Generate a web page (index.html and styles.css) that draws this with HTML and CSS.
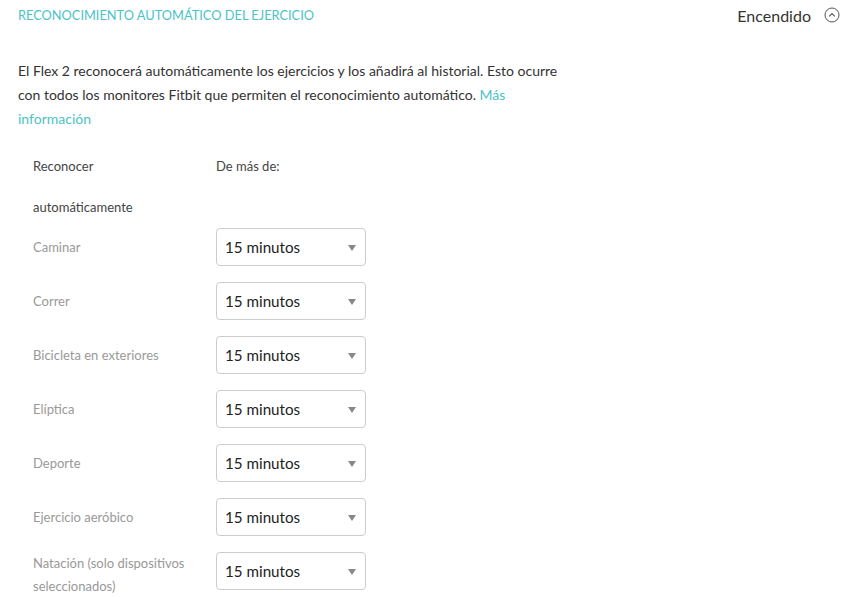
FILE: index.html
```html
<!DOCTYPE html>
<html lang="es">
<head>
<meta charset="utf-8">
<title>Reconocimiento automático del ejercicio</title>
<link rel="stylesheet" href="styles.css">
</head>
<body>
<section class="panel">
  <header class="panel-head">
    <div class="panel-title">Reconocimiento automático del ejercicio</div>
    <div class="panel-state">
      <span>Encendido</span>
      <svg class="toggle" width="16" height="16" viewBox="0 0 16 16">
        <circle cx="8" cy="8" r="7" fill="none" stroke="#555" stroke-width="1"/>
        <path d="M5.2 9.3 L8 6.5 L10.8 9.3" fill="none" stroke="#555" stroke-width="1.1"/>
      </svg>
    </div>
  </header>

  <p class="intro">El Flex 2 reconocerá automáticamente los ejercicios y los añadirá al historial. Esto ocurre con todos los monitores Fitbit que permiten el reconocimiento automático. <a href="#">Más información</a></p>

  <div class="grid">
    <div class="col-head first">Reconocer automáticamente</div>
    <div class="col-head">De más de:</div>
  </div>

  <div class="rows">
    <div class="row"><div class="label">Caminar</div><div class="select">15 minutos<span class="arrow"></span></div></div>
    <div class="row"><div class="label">Correr</div><div class="select">15 minutos<span class="arrow"></span></div></div>
    <div class="row"><div class="label">Bicicleta en exteriores</div><div class="select">15 minutos<span class="arrow"></span></div></div>
    <div class="row"><div class="label">Elíptica</div><div class="select">15 minutos<span class="arrow"></span></div></div>
    <div class="row"><div class="label">Deporte</div><div class="select">15 minutos<span class="arrow"></span></div></div>
    <div class="row"><div class="label">Ejercicio aeróbico</div><div class="select">15 minutos<span class="arrow"></span></div></div>
    <div class="row"><div class="label">Natación (solo dispositivos seleccionados)</div><div class="select">15 minutos<span class="arrow"></span></div></div>
  </div>
</section>
</body>
</html>
```

FILE: styles.css
```css
body {
  margin: 0;
  background: #fff;
  font-family: Lato, "Open Sans", sans-serif;
  color: #333;
}

.panel {
  padding: 0 18px;
}

.panel-head {
  display: flex;
  justify-content: space-between;
  align-items: center;
  height: 30px;
}
.panel-title {
  text-transform: uppercase;
  font-size: 12.8px;
  color: #4cc3c5;
}
.panel-state {
  display: flex;
  align-items: center;
  gap: 13px;
  font-size: 16px;
  color: #333;
}
.toggle {
  display: block;
}

.intro {
  margin: 29px 0 0;
  width: 562px;
  font-size: 14px;
  line-height: 24px;
}
.intro a {
  color: #4cc3c5;
  text-decoration: none;
}

.grid {
  display: grid;
  grid-template-columns: 168px 150px;
  column-gap: 15px;
  margin: 15px 0 0 15px;
}
.col-head {
  font-size: 13px;
  line-height: 41px;
  color: #444;
}
.col-head.first {
  width: 130px;
}

.rows {
  display: flex;
  flex-direction: column;
  gap: 16px;
  margin-left: 15px;
}
.row {
  display: grid;
  grid-template-columns: 168px 150px;
  column-gap: 15px;
  align-items: start;
}
.label {
  min-height: 38px;
  display: flex;
  align-items: center;
  font-size: 13px;
  line-height: 23px;
  color: #999;
}
.select {
  position: relative;
  box-sizing: border-box;
  height: 38px;
  border: 1px solid #ccc;
  border-radius: 4px;
  padding: 0 8px;
  font-size: 15.2px;
  line-height: 36px;
  color: #222;
}
.arrow {
  position: absolute;
  right: 9px;
  top: 16px;
  border-left: 4px solid transparent;
  border-right: 4px solid transparent;
  border-top: 6px solid #888;
}
```
